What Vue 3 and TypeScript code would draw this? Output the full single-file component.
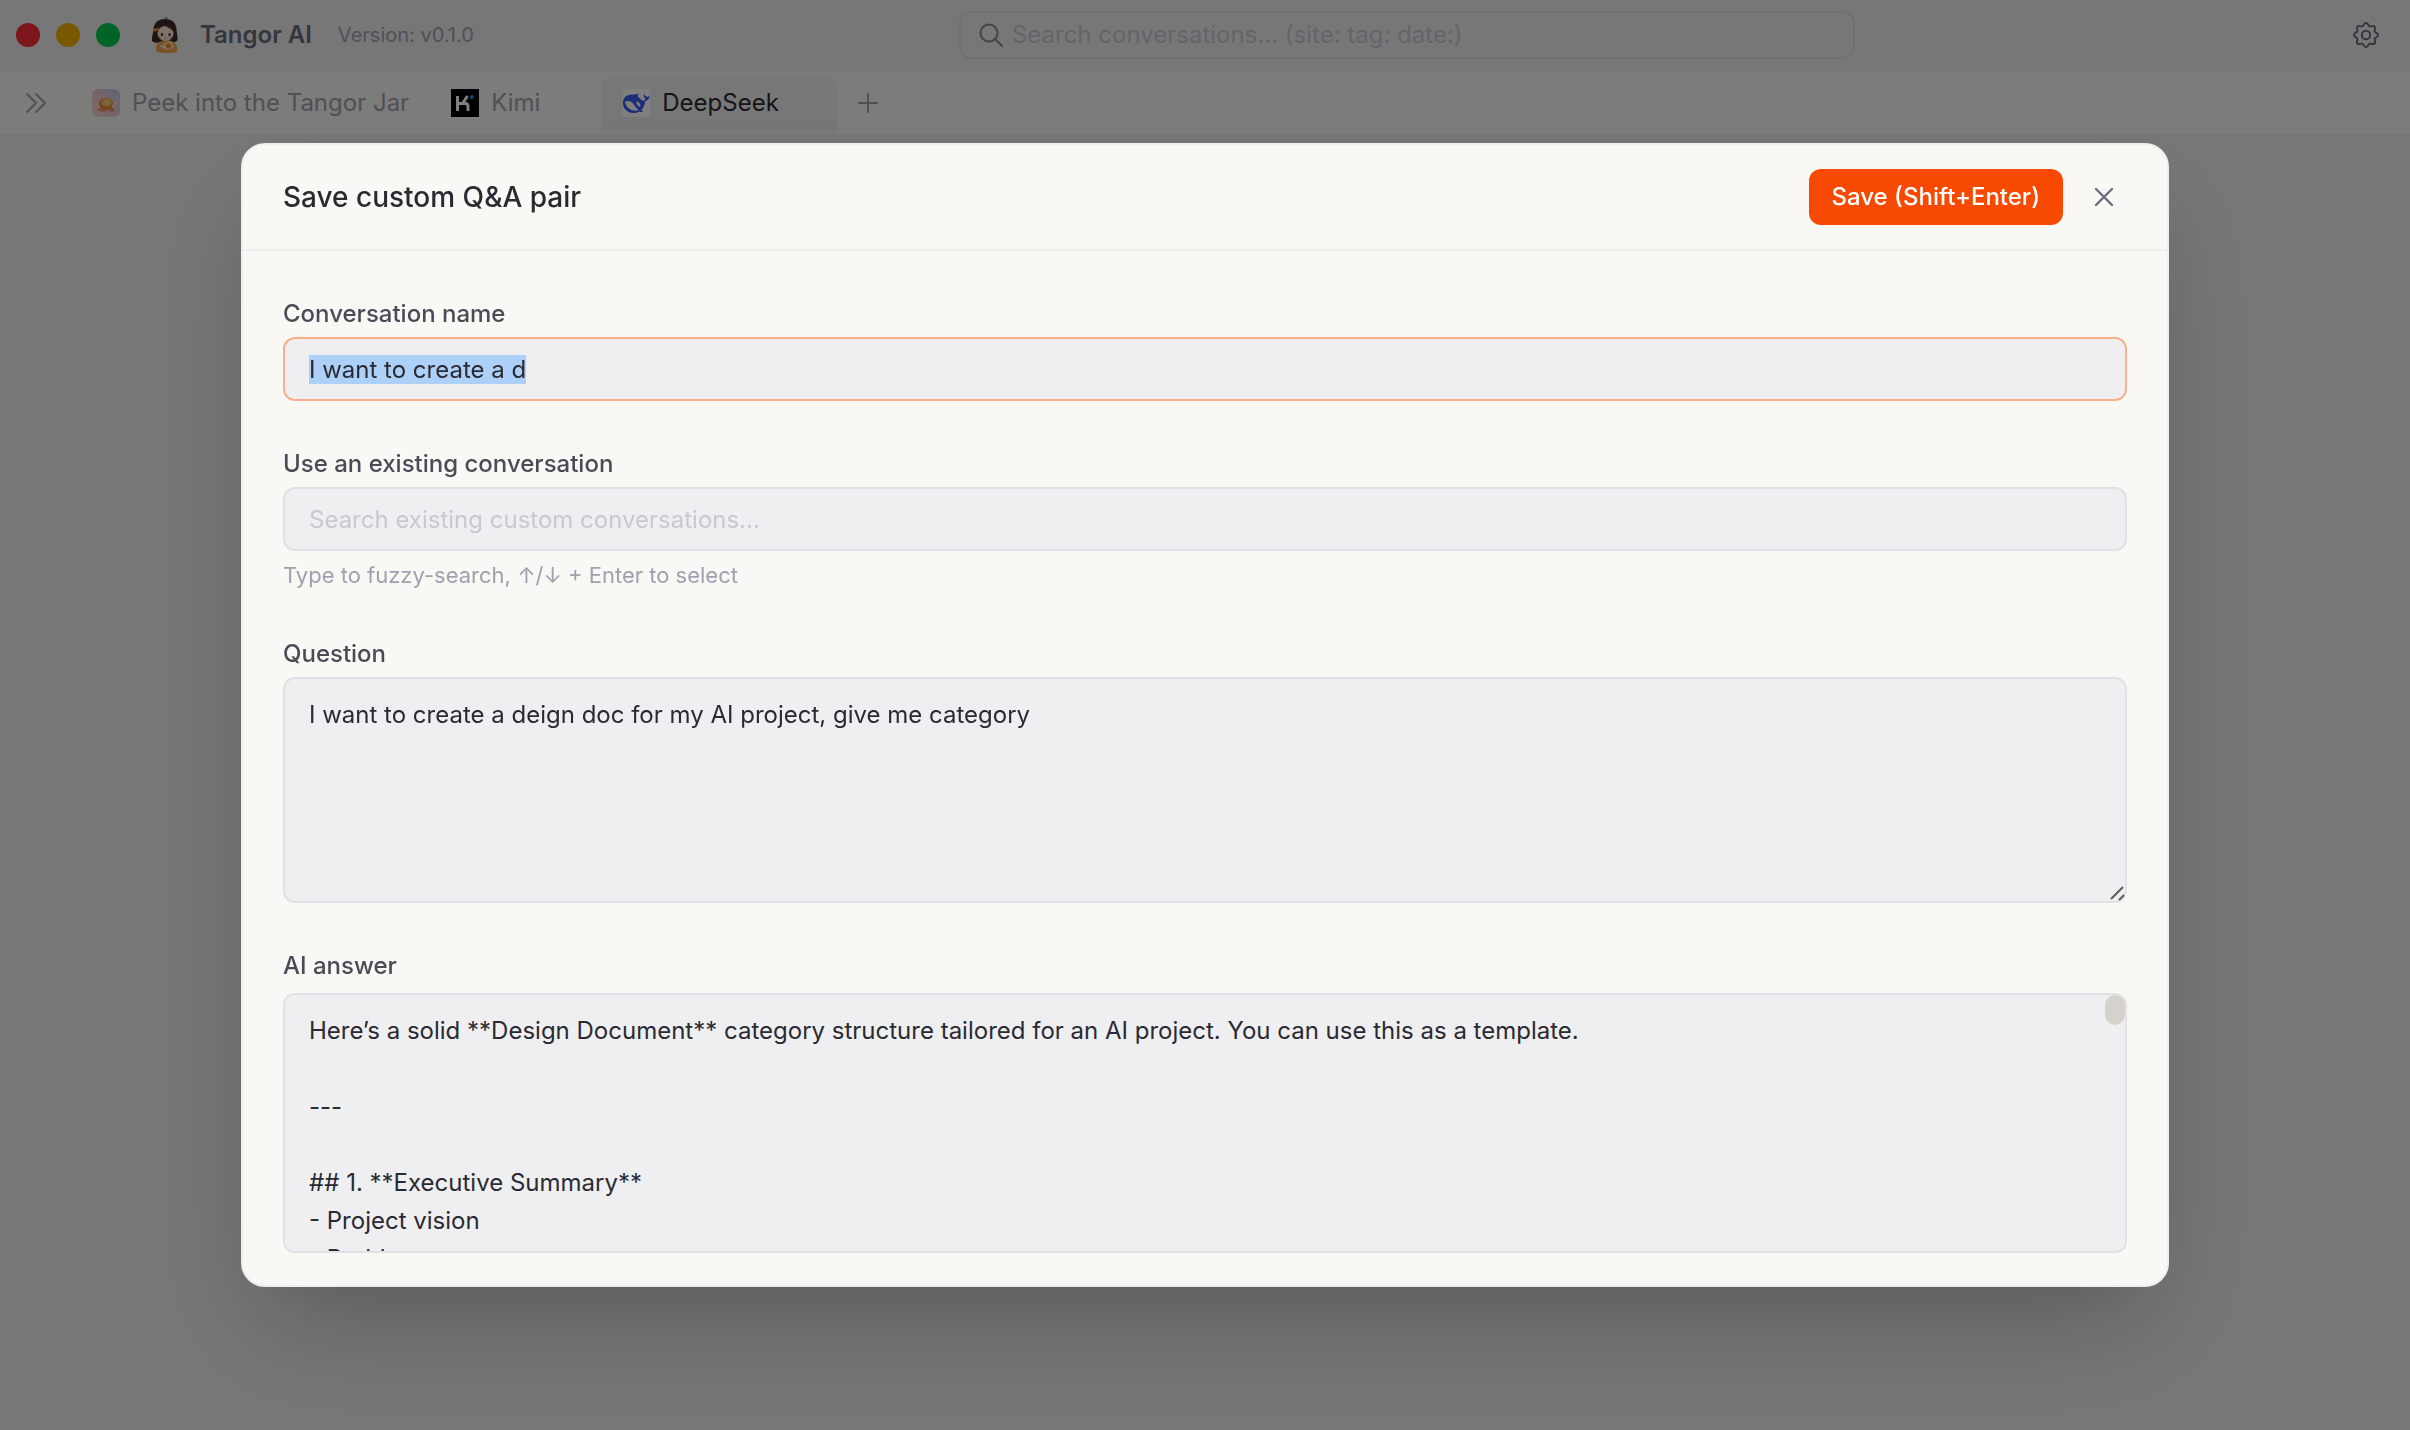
<script setup lang="ts">
import { onMounted, ref } from 'vue'

interface Tab {
  id: 'tangor' | 'kimi' | 'deepseek'
  label: string
  closable: boolean
}

const tabs: Tab[] = [
  { id: 'tangor', label: 'Peek into the Tangor Jar', closable: false },
  { id: 'kimi', label: 'Kimi', closable: true },
  { id: 'deepseek', label: 'DeepSeek', closable: true },
]
const activeTab = ref<Tab['id']>('deepseek')

const search = ref('')
const conversationName = ref('I want to create a d')
const existing = ref('')
const question = ref('I want to create a deign doc for my AI project, give me category')
const answer = ref(
  [
    'Here’s a solid **Design Document** category structure tailored for an AI project. You can use this as a template.',
    '',
    '---',
    '',
    '## 1. **Executive Summary**',
    '- Project vision',
    '- Problem statement',
  ].join('\n'),
)

const nameInput = ref<HTMLInputElement | null>(null)

onMounted(() => {
  nameInput.value?.focus({ preventScroll: true })
  nameInput.value?.select()
})
</script>

<template>
  <div class="app">
    <header class="titlebar">
      <div class="lights">
        <button class="light red" type="button" aria-label="Close window"></button>
        <button class="light yellow" type="button" aria-label="Minimize window"></button>
        <button class="light green" type="button" aria-label="Zoom window"></button>
      </div>
      <svg class="mascot" viewBox="0 0 28 36" aria-hidden="true">
        <path d="M14 2c-7 0-11 4-11.5 10C2 17 .5 20 1 24c3 2.500 6 2 8 1h11c3 1 5 0 6.500-2 .5-4-1-7-1-11C25 5.500 21 2 14 2Z" fill="#3a2826" />
        <path d="M14 2c.5-1 1.500-1.500 2.500-1" stroke="#3a2826" stroke-width="1" fill="none" />
        <path d="M6 35c-1.500-3-1-7 1-9 3-3 11-4 15-1 4 2 5 6 3.500 10-6 1.300-14 1.300-19.500 0Z" fill="#f4a548" />
        <ellipse cx="14.5" cy="16.5" rx="8" ry="7.5" fill="#fde3cf" />
        <path d="M6 15c1-5 4-7 6-8 3 3 8 4 11 8 0-6-3-10-9-10S5 9 6 15Z" fill="#3a2826" />
        <ellipse cx="11" cy="17.5" rx="1.1" ry="1.5" fill="#2d1c1c" />
        <ellipse cx="18.5" cy="17.5" rx="1.1" ry="1.5" fill="#2d1c1c" />
        <ellipse cx="9" cy="20" rx="1.5" ry="1" fill="#f7b3a0" />
        <ellipse cx="20" cy="20" rx="1.5" ry="1" fill="#f7b3a0" />
        <path d="M13.500 21q1 1 2 0" stroke="#b0503c" stroke-width=".8" fill="none" />
        <path d="M2 11l3 1 2-2 .5 3-3 1.500-2.500-.5Z" fill="#f79a2b" />
        <path d="M12 27l6-3 4 1-1 7-5 1-4-2Z" fill="#fbd9a0" />
        <circle cx="17.5" cy="29" r="2.5" fill="#f08a24" />
        <path d="M9 29c2 0 4 1 5 3M23 28c-1 1-2 2-3 4" stroke="#fde3cf" stroke-width="1.6" fill="none" />
      </svg>
      <strong class="brand">Tangor AI</strong>
      <span class="version">Version: v0.1.0</span>
      <div class="search-area">
        <label class="search">
          <svg class="search-icon" viewBox="0 0 24 24" aria-hidden="true">
            <circle cx="10" cy="10" r="8.5" />
            <path d="M16 16l7 7" />
          </svg>
          <input
            v-model="search"
            type="text"
            aria-label="Search conversations"
            placeholder="Search conversations... (site: tag: date:)"
          />
        </label>
      </div>
      <button class="icon-button gear" type="button" aria-label="Settings">
        <svg viewBox="0 0 26 26" aria-hidden="true">
          <path d="M13 1C15.3 1 15.2 3.8 16.6 4.3C18 4.9 19.9 2.9 21.5 4.5C23.1 6.1 21.1 8 21.7 9.4C22.2 10.8 25 10.7 25 13C25 15.3 22.2 15.2 21.7 16.6C21.1 18 23.1 19.9 21.5 21.5C19.9 23.1 18 21.1 16.6 21.7C15.2 22.2 15.3 25 13 25C10.7 25 10.8 22.2 9.4 21.7C8 21.1 6.1 23.1 4.5 21.5C2.9 19.9 4.9 18 4.3 16.6C3.8 15.2 1 15.3 1 13C1 10.7 3.8 10.8 4.3 9.4C4.9 8 2.9 6.1 4.5 4.5C6.1 2.9 8 4.9 9.4 4.3C10.8 3.8 10.7 1 13 1Z" />
          <circle cx="13" cy="13" r="4.2" />
        </svg>
      </button>
    </header>

    <nav class="tabbar">
      <button class="icon-button expand" type="button" aria-label="Expand sidebar">
        <svg viewBox="0 0 20 20" aria-hidden="true">
          <path d="M1 1l9 9-9 9M10 1l9 9-9 9" />
        </svg>
      </button>
      <button
        v-for="tab in tabs"
        :key="tab.id"
        class="tab"
        :class="{ active: tab.id === activeTab, closable: tab.closable }"
        type="button"
        @click="activeTab = tab.id"
      >
        <svg v-if="tab.id === 'tangor'" class="favicon" viewBox="0 0 28 28" aria-hidden="true">
          <defs>
            <linearGradient id="jar-sky" x1="0" y1="1" x2="1" y2="0">
              <stop offset="0" stop-color="#f6d3c8" />
              <stop offset=".5" stop-color="#eecbd0" />
              <stop offset="1" stop-color="#bccbf0" />
            </linearGradient>
          </defs>
          <rect width="28" height="28" rx="6" fill="url(#jar-sky)" />
          <path d="M5 21l4-4 10-1 4 5-3 2-4-2-4 2-4-1Z" fill="#ee8e78" />
          <ellipse cx="14" cy="14.5" rx="7" ry="5.5" fill="#ee8a28" />
          <ellipse cx="14.5" cy="13.5" rx="5.5" ry="4" fill="#f9b95c" />
          <path d="M14.500 10v7M9.500 13.500h10M11.500 11l6 5M17.500 11l-6 5" stroke="#fbd79a" stroke-width=".8" />
          <path d="M3 14l5 5M25 13l-5 5" stroke="#fbeae4" stroke-width="1.2" />
        </svg>
        <svg v-else-if="tab.id === 'kimi'" class="favicon" viewBox="0 0 28 28" aria-hidden="true">
          <rect width="28" height="28" fill="#000" />
          <path d="M6.500 7v15M6.500 14.500h8q2.500 0 2.500 3V22M11.500 14.500L16.500 7" fill="none" stroke="#fff" stroke-width="3" />
          <circle cx="20.8" cy="8" r="2" fill="#1783ff" />
        </svg>
        <svg v-else class="favicon" viewBox="0 0 28 28" aria-hidden="true">
          <rect width="28" height="28" fill="#fff" />
          <path
            fill="#3d5af1"
            fill-rule="evenodd"
            d="M27.600 7.300c-1.200-.2-1.600.6-2.600.5-1.200-.1-2.100-.9-2.300-2.500-.2-.9-.5-1-.7-.1-.5 2 .1 3.600 1.400 4.900-.7 1.400-1.800 1.900-3 1.300-1.300-.8-2.500-1.900-4-3.500-1.100-1.300-.9-1.500-.2-2 .9-.6.6-1.200-.8-1.100-1.300.1-2.200.8-3.500.8C5.500 4.700.9 8.400.9 13.800c0 5.900 4.600 10.300 10.300 10.300 2.500 0 4.300-.5 6-1.600 1.400.6 4.100.8 3.800.1-.1-.4-1.500-.5-1.700-1.300 2.500-2.700 3.700-6 4-9.300 2.500-.1 4.100-2 4.300-4.700ZM3 12.700c3-1.500 6.300-.6 8.200 1.900 1.800 2.500 2.800 4.800 5.300 6.200-2 1.500-5.700 1.300-8.700-.7-3-2-4.600-4.700-4.800-7.400ZM17.500 17.700c-1.500-.5-2.500-2-3-3.500-.3-1 .5-2 1.500-1.500 1.500.7 2.300 2.500 2.500 4 0 .7-.4 1.100-1 1Z"
          />
        </svg>
        <span>{{ tab.label }}</span>
      </button>
      <button class="icon-button add" type="button" aria-label="New tab">
        <svg viewBox="0 0 20 20" aria-hidden="true">
          <path d="M10 1v18M1 10h18" />
        </svg>
      </button>
    </nav>

    <div class="overlay">
      <form class="modal" role="dialog" aria-modal="true" aria-labelledby="dialog-title" @submit.prevent>
        <header class="modal-head">
          <h2 id="dialog-title">Save custom Q&amp;A pair</h2>
          <button class="save" type="submit">Save (Shift+Enter)</button>
          <button class="icon-button close" type="button" aria-label="Close">
            <svg viewBox="0 0 20 20" aria-hidden="true">
              <path d="M2 2l16 16M18 2L2 18" />
            </svg>
          </button>
        </header>

        <div class="modal-body">
          <div class="field">
            <label for="conversation-name">Conversation name</label>
            <input id="conversation-name" ref="nameInput" v-model="conversationName" class="control" type="text" />
          </div>

          <div class="field">
            <label for="existing">Use an existing conversation</label>
            <input
              id="existing"
              v-model="existing"
              class="control"
              type="text"
              placeholder="Search existing custom conversations..."
            />
            <p class="hint">Type to fuzzy-search, ↑/↓ + Enter to select</p>
          </div>

          <div class="field">
            <label for="question">Question</label>
            <div class="area question">
              <textarea id="question" v-model="question" class="control"></textarea>
              <svg class="grip" viewBox="0 0 16 16" aria-hidden="true">
                <path d="M2 14L14 2M10 15l5-5" />
              </svg>
            </div>
          </div>

          <div class="field answer-field">
            <label for="answer">AI answer</label>
            <div class="area">
              <textarea id="answer" v-model="answer" class="control"></textarea>
              <span class="thumb"></span>
            </div>
          </div>
        </div>
      </form>
    </div>
  </div>
</template>

<style>
html,
body {
  margin: 0;
  background: #efeff1;
}
</style>

<style scoped>
.app {
  min-height: 100vh;
  background: #efeff1;
  color: #2a2a32;
  font-family: Inter, 'Liberation Sans', sans-serif;
  font-size: 24px;
  line-height: 38px;
}

* {
  box-sizing: border-box;
}

button,
input,
textarea {
  margin: 0;
  border: 0;
  font: inherit;
  color: inherit;
}

button {
  padding: 0;
  background: none;
  cursor: pointer;
}

.titlebar {
  display: flex;
  align-items: center;
  height: 72px;
  padding: 0 18px 2px 16px;
}

.lights {
  display: flex;
  gap: 16px;
}

.light {
  width: 24px;
  height: 24px;
  border-radius: 50%;
}

.red {
  background: #fb2c36;
}

.yellow {
  background: #f0b100;
}

.green {
  background: #00c950;
}

.mascot {
  width: 28px;
  height: 36px;
  margin: 0 21px 0 31px;
}

.brand {
  color: #6b6b7b;
  font-weight: 600;
}

.version {
  margin-left: 26px;
  color: #a0a0b0;
  font-size: 20px;
}

.search-area {
  display: flex;
  flex: 1;
  justify-content: center;
}

.search {
  display: flex;
  align-items: center;
  gap: 9px;
  width: 896px;
  max-width: 100%;
  height: 48px;
  padding: 0 18px;
  border: 2px solid #e0e0e6;
  border-radius: 12px;
}

.search input {
  flex: 1;
  min-width: 0;
  padding: 0;
  background: none;
  outline: none;
}

svg {
  flex: none;
}

.search-icon {
  width: 24px;
  height: 24px;
  fill: none;
  stroke: #8a8a9a;
  stroke-width: 2;
  stroke-linecap: round;
}

input::placeholder {
  color: #c8c8d4;
  opacity: 1;
}

.icon-button {
  display: flex;
  align-items: center;
  justify-content: center;
}

.icon-button svg {
  width: 20px;
  height: 20px;
  fill: none;
  stroke: #a0a0b0;
  stroke-width: 2;
  stroke-linecap: round;
  stroke-linejoin: round;
}

.icon-button.gear {
  width: 52px;
  height: 52px;
}

.icon-button.gear svg {
  width: 26px;
  height: 26px;
  stroke: #6b6b7b;
}

.tabbar {
  display: flex;
  align-items: center;
  gap: 4px;
  height: 62px;
  background: #f9f8f4;
}

.expand {
  width: 68px;
  height: 56px;
  padding-left: 4px;
}

.tab {
  display: flex;
  align-items: center;
  gap: 12px;
  height: 56px;
  padding: 0 18px 0 20px;
  border-radius: 12px 12px 0 0;
  color: #a0a0b0;
}

.tab.closable {
  padding-right: 58px;
}

.tab.active {
  background: #efeff1;
  color: #2a2a32;
}

.favicon {
  width: 28px;
  height: 28px;
}

.add {
  width: 54px;
  height: 56px;
}

.overlay {
  position: fixed;
  inset: 0;
  display: flex;
  align-items: center;
  justify-content: center;
  background: rgba(0, 0, 0, 0.5);
}

.modal {
  display: flex;
  flex-direction: column;
  width: 80vw;
  height: 80vh;
  border: 2px solid #efeff1;
  border-radius: 24px;
  background: #f9f8f4;
  box-shadow: 0 50px 100px -24px rgba(0, 0, 0, 0.25);
}

.modal-head {
  display: flex;
  align-items: center;
  gap: 18px;
  padding: 24px 40px;
  border-bottom: 2px solid #efeff1;
}

h2 {
  flex: 1;
  margin: 0;
  font-size: 28px;
  font-weight: 500;
}

.save {
  height: 56px;
  padding: 0 23px;
  border-radius: 12px;
  background: #f74a00;
  color: #fff;
  font-weight: 500;
}

.close {
  width: 46px;
  height: 46px;
}

.icon-button.close svg {
  stroke: #6b6b7b;
  stroke-width: 2.4;
}

.modal-body {
  display: flex;
  flex: 1;
  flex-direction: column;
  gap: 44px;
  min-height: 0;
  padding: 44px 40px 32px;
}

.field {
  display: flex;
  flex-direction: column;
  gap: 4px;
}

.field label {
  color: #4b4b57;
  font-weight: 500;
}

.control {
  display: block;
  width: 100%;
  border: 2px solid #e0e0e6;
  border-radius: 12px;
  background: #efeff1;
  outline: none;
}

input.control {
  height: 64px;
  padding: 0 24px;
}

input.control:focus {
  border-color: #f9b08a;
}

input.control::selection {
  background: rgba(172, 207, 248, 0.99);
  color: #2a2a32;
}

.hint {
  margin: 4px 0 0;
  color: #a0a0b0;
  font-size: 22px;
  line-height: 32px;
}

.area {
  position: relative;
}

.question {
  height: 226px;
}

textarea.control {
  height: 100%;
  padding: 17px 24px;
  resize: none;
  scrollbar-width: none;
}

.grip {
  position: absolute;
  right: 2px;
  bottom: 2px;
  width: 16px;
  height: 16px;
  fill: none;
  stroke: #5c5c5c;
  stroke-width: 2;
}

.answer-field {
  flex: 1;
  gap: 8px;
  min-height: 0;
}

.answer-field .area {
  flex: 1;
  min-height: 0;
}

.thumb {
  position: absolute;
  top: 2px;
  right: 2px;
  width: 20px;
  height: 30px;
  border-radius: 10px;
  background: #d4d2ca;
}
</style>
